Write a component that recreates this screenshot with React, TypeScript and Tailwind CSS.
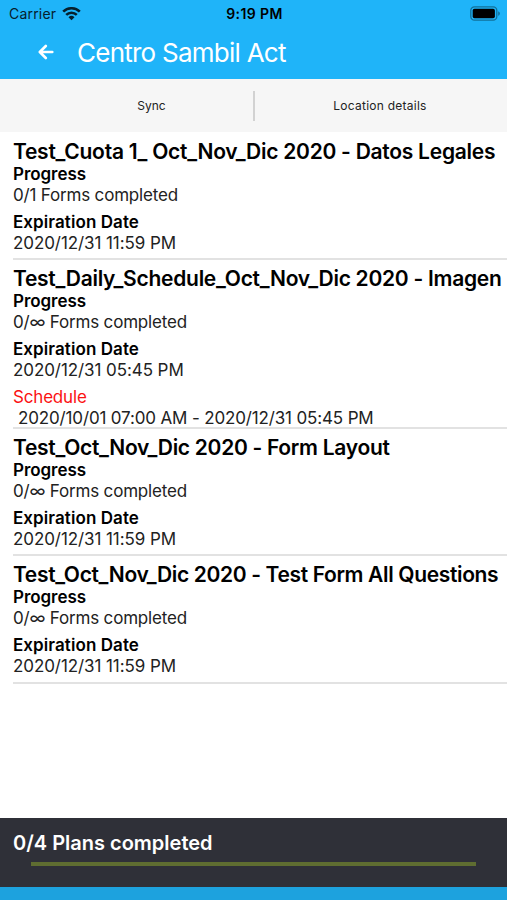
import { clsx } from "clsx";

interface Plan {
  title: string;
  titleClass: string;
  progress: string;
  expiration: string;
  schedule?: string;
}

const plans: Plan[] = [
  {
    title: "Test_Cuota 1_ Oct_Nov_Dic 2020 - Datos Legales",
    titleClass: "tracking-[-0.26px]",
    progress: "0/1 Forms completed",
    expiration: "2020/12/31 11:59 PM",
  },
  {
    title: "Test_Daily_Schedule_Oct_Nov_Dic 2020 - Imagen",
    titleClass: "tracking-[-0.27px]",
    progress: "0/∞ Forms completed",
    expiration: "2020/12/31 05:45 PM",
    schedule: "2020/10/01 07:00 AM - 2020/12/31 05:45 PM",
  },
  {
    title: "Test_Oct_Nov_Dic 2020 - Form Layout",
    titleClass: "tracking-[-0.29px]",
    progress: "0/∞ Forms completed",
    expiration: "2020/12/31 11:59 PM",
  },
  {
    title: "Test_Oct_Nov_Dic 2020 - Test Form All Questions",
    titleClass: "tracking-[-0.35px]",
    progress: "0/∞ Forms completed",
    expiration: "2020/12/31 11:59 PM",
  },
];

function WifiIcon() {
  return (
    <svg width="19" height="14" viewBox="0 0 19 14" fill="none" stroke="#06202d" strokeWidth="2.6">
      <path d="M1.2 4.7a11.8 11.8 0 0 1 16.6 0" />
      <path d="M4.2 7.9a7.6 7.6 0 0 1 10.6 0" />
      <path d="M9.5 13.3 6.500 10.300a4.300 4.300 0 0 1 6 0Z" fill="#06202d" stroke="none" />
    </svg>
  );
}

function BatteryIcon() {
  return (
    <svg width="31" height="15" viewBox="0 0 31 15">
      <rect x="0.8" y="0.8" width="26" height="13.4" rx="3.6" fill="none" stroke="#127099" strokeWidth="1.3" />
      <rect x="2.7" y="2.7" width="22.2" height="9.6" rx="1.8" fill="#000" />
      <path d="M28.2 5.2c1 .4 1.7 1.3 1.7 2.3s-.7 1.9-1.7 2.3Z" fill="#127099" />
    </svg>
  );
}

function BackIcon() {
  return (
    <svg
      width="16"
      height="16"
      viewBox="0 0 16 16"
      fill="none"
      stroke="#fff"
      strokeWidth="2.6"
      strokeLinecap="round"
      strokeLinejoin="round"
    >
      <path d="M14.3 8H2.2M7.8 2 1.8 8l6 6" />
    </svg>
  );
}

function StatusBar() {
  return (
    <div className="grid h-[27px] grid-cols-3 items-center pl-[9px] pr-[6px] text-[14px] text-[#06202d]">
      <div className="flex items-center gap-[6px]">
        <span className="tracking-[0.2px]">Carrier</span>
        <WifiIcon />
      </div>
      <span className="-ml-[1px] text-center font-semibold tracking-[0.4px] text-black">9:19 PM</span>
      <div className="flex justify-end">
        <BatteryIcon />
      </div>
    </div>
  );
}

function PlanRow({ plan }: { plan: Plan }) {
  return (
    <li
      className={clsx(
        "ml-[13px] border-b-2 border-[#e2e2e2] pt-[7px] text-[17px] leading-[21px] whitespace-nowrap",
        plan.schedule ? "h-[169px]" : "h-[127.4px]"
      )}
    >
      <h2 className={clsx("text-[21px] leading-[24px] font-semibold", plan.titleClass)}>{plan.title}</h2>
      <p className="font-semibold tracking-[-0.05px]">Progress</p>
      <p className="tracking-[-0.18px] text-[#222]">{plan.progress}</p>
      <p className="mt-[6px] font-semibold tracking-[0.08px]">Expiration Date</p>
      <p className="tracking-[-0.08px] text-[#222]">{plan.expiration}</p>
      {plan.schedule && (
        <>
          <p className="mt-[6px] tracking-[-0.18px] text-[#fb1212]">Schedule</p>
          <p className="pl-[5px] tracking-[-0.15px] text-[#222]">{plan.schedule}</p>
        </>
      )}
    </li>
  );
}

export default function App() {
  return (
    <div className="flex h-[900px] w-[507px] flex-col overflow-hidden bg-white font-['Inter','Liberation_Sans',sans-serif] text-black">
      <header className="h-[79px] bg-[#1fb4f9]">
        <StatusBar />
        <div className="flex h-[50px] items-center pl-[38px]">
          <BackIcon />
          <h1 className="ml-[23px] text-[26px] tracking-[-0.75px] text-white">Centro Sambil Act</h1>
        </div>
      </header>

      <nav className="flex h-[53px] items-center bg-[#f6f6f6] text-[12px] text-[#222]">
        <button className="w-[253px] pt-[1px] pl-[50px] text-center">Sync</button>
        <div className="h-[30px] w-[2px] bg-[#d2d2d2]" />
        <button className="flex-1 pt-[1px] pr-[2px] text-center tracking-[0.25px]">Location details</button>
      </nav>

      <ul className="flex-1 pt-[0.6px]">
        {plans.map((plan) => (
          <PlanRow key={plan.title} plan={plan} />
        ))}
      </ul>

      <footer className="h-[82px] border-b-[13px] border-[#1da2de] bg-[#2f3038] pt-[12px]">
        <p className="pl-[13px] text-[20px] leading-[26px] font-semibold text-white">0/4 Plans completed</p>
        <div className="mt-[6px] mr-[31px] ml-[31px] h-[4px] bg-[#5f6d31]" />
      </footer>
    </div>
  );
}
